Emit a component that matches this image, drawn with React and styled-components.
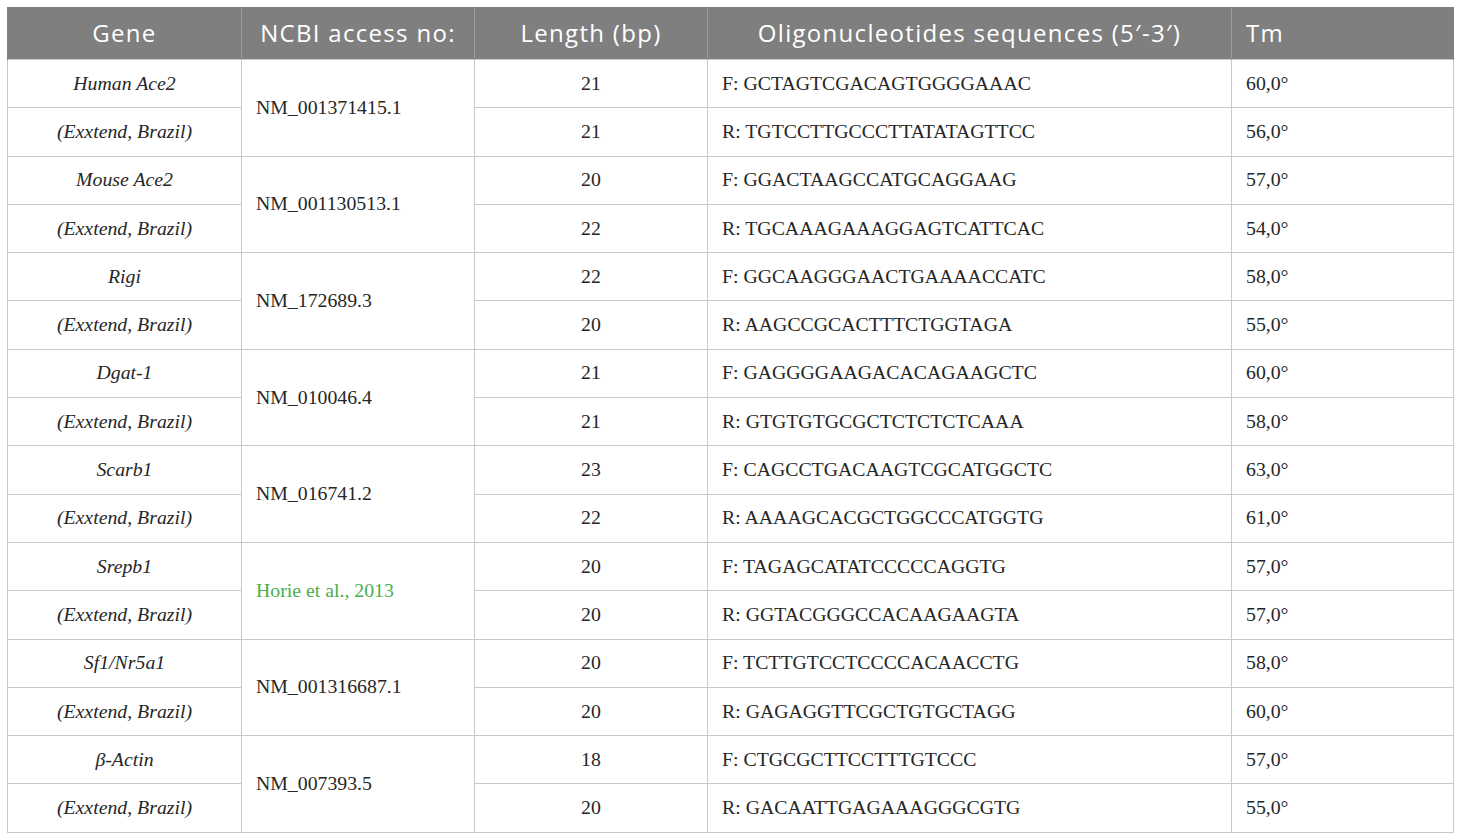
import React from "react";
import styled, { createGlobalStyle } from "styled-components";

const Global = createGlobalStyle`
  html, body { margin: 0; padding: 0; background: #fff; }
  body { padding: 7px 0 0 7px; }
`;

const Table = styled.table`
  border-collapse: collapse;
  table-layout: fixed;
  width: 1446px;
  font-family: "Liberation Serif", "Times New Roman", serif;
  font-size: 19.8px;
  color: #262626;
`;

const HeadCell = styled.th`
  background: #7f7f7f;
  color: #fff;
  font-family: "Open Sans", "Noto Sans", sans-serif;
  font-weight: 400;
  font-size: 24px;
  letter-spacing: 1.3px;
  height: 52px;
  padding: 0 14px 2px;
  box-sizing: border-box;
  text-align: ${(p) => (p.$left ? "left" : "center")};
  border-left: 1px solid #9c9c9c;
  border-top: 1px solid #7f7f7f;
  white-space: nowrap;
  &:first-child { border-left: 1px solid #7f7f7f; }
  &:last-child { border-right: 1px solid #7f7f7f; }
`;

const Cell = styled.td`
  height: 48.3px;
  box-sizing: border-box;
  padding: 0 14px 1px;
  border: 1px solid #c9c9c9;
  text-align: ${(p) => (p.$center ? "center" : "left")};
  font-style: ${(p) => (p.$italic ? "italic" : "normal")};
  color: ${(p) => (p.$green ? "#4aae4f" : "inherit")};
  white-space: nowrap;
`;

const rows = [
  ["Human Ace2", "NM_001371415.1", ["21", "F: GCTAGTCGACAGTGGGGAAAC", "60,0°"], ["21", "R: TGTCCTTGCCCTTATATAGTTCC", "56,0°"]],
  ["Mouse Ace2", "NM_001130513.1", ["20", "F: GGACTAAGCCATGCAGGAAG", "57,0°"], ["22", "R: TGCAAAGAAAGGAGTCATTCAC", "54,0°"]],
  ["Rigi", "NM_172689.3", ["22", "F: GGCAAGGGAACTGAAAACCATC", "58,0°"], ["20", "R: AAGCCGCACTTTCTGGTAGA", "55,0°"]],
  ["Dgat-1", "NM_010046.4", ["21", "F: GAGGGGAAGACACAGAAGCTC", "60,0°"], ["21", "R: GTGTGTGCGCTCTCTCTCAAA", "58,0°"]],
  ["Scarb1", "NM_016741.2", ["23", "F: CAGCCTGACAAGTCGCATGGCTC", "63,0°"], ["22", "R: AAAAGCACGCTGGCCCATGGTG", "61,0°"]],
  ["Srepb1", "Horie et al., 2013", ["20", "F: TAGAGCATATCCCCCAGGTG", "57,0°"], ["20", "R: GGTACGGGCCACAAGAAGTA", "57,0°"]],
  ["Sf1/Nr5a1", "NM_001316687.1", ["20", "F: TCTTGTCCTCCCCACAACCTG", "58,0°"], ["20", "R: GAGAGGTTCGCTGTGCTAGG", "60,0°"]],
  ["β-Actin", "NM_007393.5", ["18", "F: CTGCGCTTCCTTTGTCCC", "57,0°"], ["20", "R: GACAATTGAGAAAGGGCGTG", "55,0°"]],
];

export default function App() {
  return (
    <>
      <Global />
      <Table>
        <colgroup>
          <col style={{ width: 234 }} />
          <col style={{ width: 233 }} />
          <col style={{ width: 233 }} />
          <col style={{ width: 524 }} />
          <col style={{ width: 222 }} />
        </colgroup>
        <thead>
          <tr>
            <HeadCell>Gene</HeadCell>
            <HeadCell>NCBI access no:</HeadCell>
            <HeadCell>Length (bp)</HeadCell>
            <HeadCell>Oligonucleotides sequences (5′-3′)</HeadCell>
            <HeadCell $left>Tm</HeadCell>
          </tr>
        </thead>
        <tbody>
          {rows.map(([gene, acc, f, r]) => (
            <React.Fragment key={gene}>
              <tr>
                <Cell $center $italic>{gene}</Cell>
                <Cell rowSpan={2} $green={acc.startsWith("Horie")}>{acc}</Cell>
                <Cell $center>{f[0]}</Cell>
                <Cell>{f[1]}</Cell>
                <Cell>{f[2]}</Cell>
              </tr>
              <tr>
                <Cell $center $italic>(Exxtend, Brazil)</Cell>
                <Cell $center>{r[0]}</Cell>
                <Cell>{r[1]}</Cell>
                <Cell>{r[2]}</Cell>
              </tr>
            </React.Fragment>
          ))}
        </tbody>
      </Table>
    </>
  );
}
